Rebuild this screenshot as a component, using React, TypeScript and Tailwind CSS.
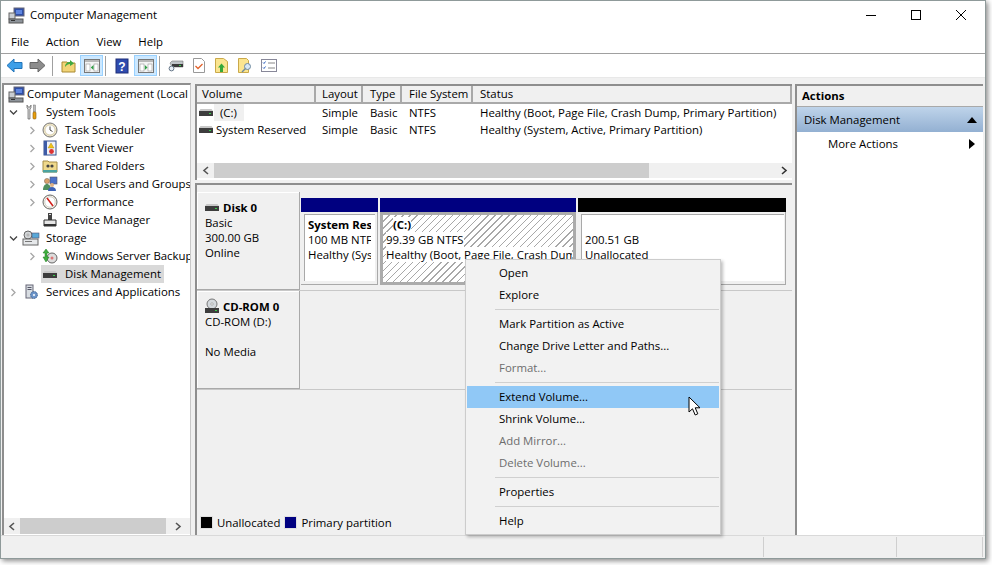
import React from "react";

// small drawn icons, 16px box unless noted
const Computer = () => (
  <svg width="17" height="17" viewBox="0 0 17 17" className="shrink-0">
    <rect x="6" y="1" width="10" height="8" fill="#2f4fa8" stroke="#667" />
    <rect x="8" y="3" width="6" height="4" fill="#5f86e0" />
    <rect x="1" y="6" width="6" height="6" fill="#c9cdd2" stroke="#666" />
    <rect x="1" y="12" width="14" height="4" fill="#8d939a" stroke="#555" />
    <rect x="3" y="13" width="4" height="1" fill="#333" />
  </svg>
);
const Tools = () => (
  <svg width="16" height="16" viewBox="0 0 16 16" className="shrink-0">
    <path d="M4 1v3l1 1v10h2V5l1-1V1L7 3H5z" fill="#d5d5d5" stroke="#666" strokeWidth=".7" />
    <rect x="10.5" y="1" width="2" height="7" fill="#bbb" stroke="#777" strokeWidth=".5" />
    <rect x="10" y="8" width="3" height="7" rx="1" fill="#e8a010" stroke="#8a5a00" strokeWidth=".6" />
  </svg>
);
const Clock = () => (
  <svg width="16" height="16" viewBox="0 0 16 16" className="shrink-0">
    <circle cx="8" cy="8" r="7" fill="#efe6c8" stroke="#777" />
    <circle cx="8" cy="8" r="5" fill="#fff" stroke="#c5b98e" strokeWidth=".6" />
    <path d="M8 4.5V8l2.5 1.5" stroke="#444" fill="none" />
  </svg>
);
const EventLog = () => (
  <svg width="16" height="16" viewBox="0 0 16 16" className="shrink-0">
    <rect x="2" y="1" width="12" height="14" fill="#eef1f8" stroke="#36508f" />
    <rect x="2" y="1" width="3" height="14" fill="#3d5ba6" />
    <path d="M9 3l3 5H6z" fill="#f2c21a" stroke="#a57d00" strokeWidth=".4" />
    <circle cx="9.5" cy="11.5" r="2.4" fill="#d33" />
  </svg>
);
const Shared = () => (
  <svg width="16" height="16" viewBox="0 0 16 16" className="shrink-0">
    <path d="M1 3h5l1 1h8v10H1z" fill="#efd98c" stroke="#a58c45" />
    <circle cx="6" cy="8" r="1.6" fill="#444" />
    <circle cx="10" cy="8" r="1.6" fill="#444" />
    <rect x="1" y="12" width="14" height="2.5" fill="#4aa3a0" />
  </svg>
);
const Users = () => (
  <svg width="16" height="16" viewBox="0 0 16 16" className="shrink-0">
    <rect x="8" y="1" width="7" height="7" fill="#4d72c9" stroke="#556" strokeWidth=".6" />
    <circle cx="5" cy="5" r="2.6" fill="#d9a06b" stroke="#765" strokeWidth=".5" />
    <path d="M1 14c0-4 2-6 4-6s4 2 4 6z" fill="#4f8f5f" />
    <circle cx="10" cy="9" r="2" fill="#dfb184" />
    <path d="M6 15c0-3 2-4 4-4s4 1 4 4z" fill="#3e62b5" />
  </svg>
);
const Perf = () => (
  <svg width="16" height="16" viewBox="0 0 16 16" className="shrink-0">
    <circle cx="8" cy="8" r="7" fill="#f7f3e6" stroke="#666" />
    <circle cx="8" cy="8" r="5.2" fill="#fff" stroke="#aaa" strokeWidth=".5" />
    <path d="M5 4l6 8" stroke="#d2201a" strokeWidth="1.5" />
  </svg>
);
const DevMgr = () => (
  <svg width="16" height="16" viewBox="0 0 16 16" className="shrink-0">
    <rect x="6" y="1" width="4" height="7" fill="#444" />
    <rect x="7" y="2" width="2" height="1" fill="#ddd" />
    <path d="M2 8h12v6H2z" fill="#e6e6e6" stroke="#333" />
    <rect x="2" y="12" width="12" height="2" fill="#333" />
  </svg>
);
const Storage = () => (
  <svg width="18" height="16" viewBox="0 0 18 16" className="shrink-0">
    <circle cx="6" cy="5" r="4" fill="#d3d6d8" stroke="#666" />
    <circle cx="6" cy="5" r="1" fill="#fff" stroke="#666" strokeWidth=".5" />
    <rect x="10" y="3" width="7" height="5" fill="#58a8d8" stroke="#557" strokeWidth=".6" />
    <rect x="1" y="9" width="15" height="6" fill="#e6e8ea" stroke="#666" />
    <rect x="3" y="11" width="7" height="1" fill="#777" />
  </svg>
);
const Backup = () => (
  <svg width="16" height="16" viewBox="0 0 16 16" className="shrink-0">
    <circle cx="10" cy="10" r="5" fill="#ddd" stroke="#666" />
    <circle cx="10" cy="10" r="1.5" fill="#d77" />
    <path d="M4 1l3 4H5v4h2l-3 5-3-5h2V5H1z" fill="#3fae3f" stroke="#1f7a1f" strokeWidth=".5" />
  </svg>
);
const Services = () => (
  <svg width="16" height="16" viewBox="0 0 16 16" className="shrink-0">
    <rect x="3" y="1" width="7" height="13" fill="#d8dde2" stroke="#667" />
    <rect x="4.5" y="3" width="4" height="1" fill="#556" />
    <rect x="4.5" y="5" width="4" height="1" fill="#556" />
    <circle cx="11" cy="11" r="3.4" fill="#6d95c9" stroke="#3b5f8f" strokeWidth="1" strokeDasharray="1.4 .7" />
    <circle cx="11" cy="11" r="1" fill="#fff" />
  </svg>
);
const Drive = () => (
  <svg width="14" height="9" viewBox="0 0 14 9" className="shrink-0">
    <path d="M0 3l1.5-2h11L14 3z" fill="#c8c8c8" />
    <rect x="0" y="3" width="14" height="5" fill="#3d3d3d" />
    <rect x="10" y="5" width="2" height="1" fill="#37d04a" />
  </svg>
);
const Disc = () => (
  <svg width="14" height="16" viewBox="0 0 14 16" className="shrink-0">
    <circle cx="7" cy="6" r="5" fill="#d5dade" stroke="#777" />
    <circle cx="7" cy="6" r="1.2" fill="#fff" stroke="#777" strokeWidth=".5" />
    <rect x="0" y="10" width="14" height="5" fill="#3d3d3d" />
    <rect x="10" y="12" width="2" height="1" fill="#37d04a" />
  </svg>
);

const Chevron = ({ open }: { open?: boolean }) => (
  <svg width="9" height="9" viewBox="0 0 9 9" className="shrink-0">
    {open ? (
      <path d="M1 2.5l3.5 3.5L8 2.5" fill="none" stroke="#444" strokeWidth="1.3" />
    ) : (
      <path d="M2.5 1L6 4.5 2.5 8" fill="none" stroke="#a6a6a6" strokeWidth="1.3" />
    )}
  </svg>
);

const ScrollArrow = ({ dir, dark }: { dir: "l" | "r"; dark?: boolean }) => (
  <svg width="8" height="9" viewBox="0 0 8 9" className="shrink-0">
    <path d={dir === "l" ? "M6 1L2 4.5 6 8" : "M2 1l4 3.5L2 8"} fill="none" stroke={dark ? "#333" : "#555"} strokeWidth="1.6" />
  </svg>
);

const ToolBtn = ({ active, className, children }: { active?: boolean; className?: string; children: React.ReactNode }) => (
  <div className={`w-[23px] h-[21px] flex items-center justify-center shrink-0 ${active ? "bg-[#cce8ff] border border-[#99d1ff]" : ""} ${className ?? ""}`}>
    {children}
  </div>
);

const Panes = ({ side }: { side: "l" | "r" }) => (
  <svg width="16" height="14" viewBox="0 0 16 14">
    <rect x=".5" y=".5" width="15" height="13" fill="#f4f4f4" stroke="#777" />
    <rect x="1" y="1" width="14" height="2" fill="#b9b9b9" />
    <rect x="2" y="5" width="4" height="7" fill="#fff" stroke="#999" strokeWidth=".6" />
    <rect x="10" y="5" width="4" height="7" fill="#fff" stroke="#999" strokeWidth=".6" />
    <path d={side === "l" ? "M9.5 6v5L6.8 8.5z" : "M6.8 6v5l2.7-2.5z"} fill="#2f9e44" />
  </svg>
);

const Sep = ({ className }: { className: string }) => <div className={`w-px h-[20px] bg-[#a0a0a0] shrink-0 ${className}`} />;

const Toolbar = () => (
  <div className="h-[23px] flex items-center pl-[2px] bg-white shrink-0">
    <ToolBtn>
      <svg width="17" height="15" viewBox="0 0 17 15">
        <path d="M8 1L1 7.5 8 14v-3.5h8v-6H8z" fill="#3d9fe8" stroke="#2173b8" />
      </svg>
    </ToolBtn>
    <ToolBtn>
      <svg width="17" height="15" viewBox="0 0 17 15">
        <path d="M9 1l7 6.5L9 14v-3.5H1v-6h8z" fill="#8c8c8c" stroke="#666" />
      </svg>
    </ToolBtn>
    <Sep className="ml-[3px] mr-[4px]" />
    <ToolBtn>
      <svg width="15" height="15" viewBox="0 0 15 15">
        <path d="M1 4h5l1 1h7v9H1z" fill="#f2d477" stroke="#a98a35" />
        <path d="M4 9c0-3 2-5 5-5V2l4 3.5L9 8V6C7 6 5.5 7 4 9z" fill="#3fa83f" />
      </svg>
    </ToolBtn>
    <ToolBtn active><Panes side="l" /></ToolBtn>
    <Sep className="ml-[2px] mr-[4px]" />
    <ToolBtn>
      <svg width="14" height="16" viewBox="0 0 14 16">
        <rect x="1" y="1" width="12" height="14" fill="#2f4bae" stroke="#1e2f78" />
        <text x="7" y="12.5" textAnchor="middle" fontSize="12" fontWeight="700" fill="#fff" fontFamily="Liberation Sans">?</text>
      </svg>
    </ToolBtn>
    <ToolBtn active className="ml-[1px]"><Panes side="r" /></ToolBtn>
    <Sep className="ml-[2px] mr-[4px]" />
    <ToolBtn>
      <svg width="16" height="12" viewBox="0 0 16 12">
        <path d="M2 3l2-2h11v6H4z" fill="#bfc4c8" stroke="#777" strokeWidth=".6" />
        <rect x="4" y="4" width="11" height="3" fill="#3a3a3a" />
        <rect x="11" y="5" width="2" height="1" fill="#37d04a" />
        <circle cx="3.5" cy="8.5" r="2.4" fill="#e8eef5" stroke="#678" />
      </svg>
    </ToolBtn>
    <ToolBtn>
      <svg width="12" height="15" viewBox="0 0 12 15">
        <path d="M.5.5h8l3 3v11H.5z" fill="#fff" stroke="#999" />
        <path d="M2.5 8l2.5 2.5L9.5 6" fill="none" stroke="#e2622b" strokeWidth="1.3" />
      </svg>
    </ToolBtn>
    <ToolBtn>
      <svg width="13" height="15" viewBox="0 0 13 15">
        <path d="M.5.5h8l4 3v11H.5z" fill="#fbe58f" stroke="#caa94a" />
        <path d="M6.5 5.5l3.5 4H8V14H5V9.5H3z" fill="#36a83a" />
      </svg>
    </ToolBtn>
    <ToolBtn className="ml-[1px]">
      <svg width="15" height="15" viewBox="0 0 15 15">
        <path d="M.5.5h8l2 2v12H.5z" fill="#fbe58f" stroke="#caa94a" />
        <circle cx="9.5" cy="8.5" r="3" fill="#d7e8f5" stroke="#6f8a9f" />
        <path d="M7.5 10.5L4 14" stroke="#6f8a9f" strokeWidth="1.5" />
      </svg>
    </ToolBtn>
    <ToolBtn>
      <svg width="16" height="13" viewBox="0 0 16 13">
        <rect x=".5" y=".5" width="15" height="12" fill="#fff" stroke="#889" />
        <path d="M2 3.5l1 1 1.5-2M2 8.5l1 1 1.5-2" fill="none" stroke="#2f62c0" />
        <path d="M7 4h7M7 9h7" stroke="#888" />
      </svg>
    </ToolBtn>
  </div>
);

type TreeItem = { level: number; label: string; icon: React.ReactNode; arrow?: "open" | "closed"; selected?: boolean };

const treeItems: TreeItem[] = [
  { level: 0, label: "Computer Management (Local", icon: <Computer /> },
  { level: 1, label: "System Tools", icon: <Tools />, arrow: "open" },
  { level: 2, label: "Task Scheduler", icon: <Clock />, arrow: "closed" },
  { level: 2, label: "Event Viewer", icon: <EventLog />, arrow: "closed" },
  { level: 2, label: "Shared Folders", icon: <Shared />, arrow: "closed" },
  { level: 2, label: "Local Users and Groups", icon: <Users />, arrow: "closed" },
  { level: 2, label: "Performance", icon: <Perf />, arrow: "closed" },
  { level: 2, label: "Device Manager", icon: <DevMgr /> },
  { level: 1, label: "Storage", icon: <Storage />, arrow: "open" },
  { level: 2, label: "Windows Server Backup", icon: <Backup />, arrow: "closed" },
  { level: 2, label: "Disk Management", icon: <Drive />, selected: true },
  { level: 1, label: "Services and Applications", icon: <Services />, arrow: "closed" },
];

const indent = ["pl-[3px]", "pl-[5px]", "pl-[24px]"];

const Tree = () => (
  <div className="w-[189px] shrink-0 flex flex-col bg-white border-l-2 border-t-2 border-[#8e8e8e] border-r border-r-[#c8c8c8] overflow-hidden">
    <div className="flex-1 overflow-hidden">
      {treeItems.map((t) => (
        <div key={t.label} className={`h-[18px] flex items-center whitespace-nowrap ${indent[t.level]}`}>
          {t.level > 0 && (
            <div className="w-[9px] shrink-0 mr-[4px] flex">
              {t.arrow && <Chevron open={t.arrow === "open"} />}
            </div>
          )}
          <div className={`flex items-center h-[18px] ${t.selected ? "bg-[#d9d9d9] pr-[3px]" : ""}`}>
            <div className="w-[18px] flex justify-center shrink-0">{t.icon}</div>
            <span className={t.level > 0 ? "ml-[6px]" : "ml-[2px]"}>{t.label}</span>
          </div>
        </div>
      ))}
    </div>
    <div className="h-[16px] mb-[1px] flex items-center shrink-0 bg-[#f0f0f0]">
      <div className="w-[16px] flex justify-center"><ScrollArrow dir="l" /></div>
      <div className="w-[146px] h-full bg-[#cdcdcd]" />
      <div className="flex-1 flex justify-center"><ScrollArrow dir="r" /></div>
    </div>
  </div>
);

const cols = "grid grid-cols-[119px_47px_39px_71px_1fr]";
const pads = ["pl-[5px]", "pl-[6px]", "pl-[7px]", "pl-[7px]", "pl-[7px]"];

const VolumeList = () => (
  <div className="h-[96px] shrink-0 flex flex-col bg-white border-l-2 border-t-2 border-[#8e8e8e]">
    <div className={`${cols} shrink-0`}>
      {["Volume", "Layout", "Type", "File System", "Status"].map((h, i) => (
        <div key={h} className={`h-[18px] flex items-center bg-[#f0f0f0] border-r-2 border-r-[#a9a9a9] border-b-2 border-b-[#a9a9a9] ${pads[i]}`}>{h}</div>
      ))}
    </div>
    <div className="flex-1">
      <div className={`${cols} h-[17px] items-center whitespace-nowrap`}>
        <div className="flex items-center pl-[2px]">
          <Drive />
          <span className="ml-[1px] pl-[6px] pr-[7px] bg-[#f0f0f0] leading-[17px]">(C:)</span>
        </div>
        <div className={pads[1]}>Simple</div>
        <div className={pads[2]}>Basic</div>
        <div className={pads[3]}>NTFS</div>
        <div className={pads[4]}>Healthy (Boot, Page File, Crash Dump, Primary Partition)</div>
      </div>
      <div className={`${cols} h-[17px] items-center whitespace-nowrap`}>
        <div className="flex items-center pl-[2px]">
          <Drive />
          <span className="ml-[3px]">System Reserved</span>
        </div>
        <div className={pads[1]}>Simple</div>
        <div className={pads[2]}>Basic</div>
        <div className={pads[3]}>NTFS</div>
        <div className={pads[4]}>Healthy (System, Active, Primary Partition)</div>
      </div>
    </div>
    <div className="h-[15px] mb-[2px] flex items-center shrink-0 bg-[#f0f0f0]">
      <div className="w-[17px] flex justify-center"><ScrollArrow dir="l" /></div>
      <div className="w-[435px] h-full bg-[#cdcdcd]" />
      <div className="flex-1" />
      <div className="w-[17px] flex justify-center"><ScrollArrow dir="r" dark /></div>
    </div>
  </div>
);

const DiskLabel = ({ children }: { children: React.ReactNode }) => (
  <div className="w-[103px] h-[98px] shrink-0 pl-[8px] pt-[8px] leading-[15px] bg-[#f0f0f0] border-r border-b border-[#a9a9a9] shadow-[inset_1px_1px_0_#fff]">
    {children}
  </div>
);

const DiskGraphics = () => (
  <div className="flex-1 min-h-0 flex flex-col bg-[#f0f0f0] border-l-2 border-t-2 border-[#8e8e8e]">
    <div className="flex-1 min-h-0 pt-[7px]">
      <div className="flex h-[99px] border-b border-[#c8c8c8]">
        <DiskLabel>
          <div className="flex items-center font-bold">
            <Drive />
            <span className="ml-[4px]">Disk 0</span>
          </div>
          <div>Basic</div>
          <div>300.00 GB</div>
          <div>Online</div>
        </DiskLabel>
        <div className="flex pl-[1px] pt-[6px] gap-[2px]">
          <div className="w-[77px]">
            <div className="h-[14px] bg-[#000080]" />
            <div className="h-[73px] pl-[3px] pr-[2px] pt-[2px] pb-[3px] bg-[#f0f0f0] border-r border-b border-[#a9a9a9]">
              <div className="h-full bg-white border-l border-t border-[#a9a9a9] pl-[3px] pr-[4px] pt-[2px] leading-[15px]">
                <div className="overflow-hidden whitespace-nowrap">
                  <div className="font-bold">System Reserved</div>
                  <div>100 MB NTFS</div>
                  <div>Healthy (System, Active, Primary Partition)</div>
                </div>
              </div>
            </div>
          </div>
          <div className="w-[196px]">
            <div className="h-[14px] bg-[#000080]" />
            <div className="h-[73px] border-[3px] border-[#ababab] bg-[repeating-linear-gradient(135deg,#fff_0,#fff_4px,#a8a8a8_4px,#a8a8a8_5px)] pl-[3px] pr-[1px] pt-[2px] leading-[15px]">
              <div className="overflow-hidden whitespace-nowrap">
                <div className="font-bold pl-[7px]"><span className="bg-white">(C:)</span></div>
                <div><span className="bg-white">99.39 GB NTFS</span></div>
                <div><span className="bg-white">Healthy (Boot, Page File, Crash Dump, Primary Partition)</span></div>
              </div>
            </div>
          </div>
          <div className="w-[208px]">
            <div className="h-[14px] bg-black" />
            <div className="h-[73px] pl-[3px] pr-[1px] pt-[2px] pb-[3px] bg-[#f0f0f0] border-r border-b border-[#a9a9a9]">
              <div className="h-full bg-white border-l border-t border-[#a9a9a9] pl-[3px] pt-[17px] leading-[15px]">
                <div>200.51 GB</div>
                <div>Unallocated</div>
              </div>
            </div>
          </div>
        </div>
      </div>
      <div className="flex h-[99px] border-b border-[#c8c8c8]">
        <DiskLabel>
          <div className="flex items-center font-bold -mt-[1px]">
            <Disc />
            <span className="ml-[4px]">CD-ROM 0</span>
          </div>
          <div>CD-ROM (D:)</div>
          <div className="h-[15px]" />
          <div>No Media</div>
        </DiskLabel>
      </div>
    </div>
    <div className="h-[21px] mb-[2px] shrink-0 flex items-center pl-[3px]">
      <div className="w-[11px] h-[11px] bg-black border border-[#e0e0e0] box-content" />
      <span className="ml-[4px]">Unallocated</span>
      <div className="ml-[4px] w-[11px] h-[11px] bg-[#000080] border border-[#e0e0e0] box-content" />
      <span className="ml-[4px]">Primary partition</span>
    </div>
  </div>
);

const ActionsPane = () => (
  <div className="w-[188px] shrink-0 flex flex-col bg-white border-l-2 border-t-2 border-[#8e8e8e]">
    <div className="h-[21px] pl-[5px] flex items-center font-bold bg-[#f0f0f0] border-b border-[#a9a9a9]">Actions</div>
    <div className="h-[25px] pl-[7px] pr-[6px] flex items-center justify-between bg-gradient-to-b from-[#bfd4ea] to-[#93b0d2]">
      <span>Disk Management</span>
      <svg width="10" height="6" viewBox="0 0 10 6"><path d="M5 0l5 6H0z" fill="#000" /></svg>
    </div>
    <div className="h-[24px] pl-[31px] pr-[8px] flex items-center justify-between">
      <span>More Actions</span>
      <svg width="6" height="10" viewBox="0 0 6 10"><path d="M0 0l6 5-6 5z" fill="#000" /></svg>
    </div>
  </div>
);

const MenuRow = ({ label, disabled, active }: { label: string; disabled?: boolean; active?: boolean }) => (
  <div className={`h-[22px] pl-[32px] flex items-center ${active ? "bg-[#90c8f6]" : ""} ${disabled ? "text-[#6d6d6d]" : ""}`}>{label}</div>
);

const MenuSep = () => (
  <div className="h-[7px] flex items-center pl-[28px]">
    <div className="w-full h-px bg-[#d0d0d0]" />
  </div>
);

const ContextMenu = () => (
  <div className="absolute left-[465px] top-[259px] w-[256px] h-[276px] bg-[#f2f2f2] border border-[#cccccc] pl-[1px] pr-[1px] pt-[2px] shadow-[2px_2px_3px_rgba(0,0,0,0.25)]">
    <MenuRow label="Open" />
    <MenuRow label="Explore" />
    <MenuSep />
    <MenuRow label="Mark Partition as Active" />
    <MenuRow label="Change Drive Letter and Paths..." />
    <MenuRow label="Format..." disabled />
    <MenuSep />
    <MenuRow label="Extend Volume..." active />
    <MenuRow label="Shrink Volume..." />
    <MenuRow label="Add Mirror..." disabled />
    <MenuRow label="Delete Volume..." disabled />
    <MenuSep />
    <MenuRow label="Properties" />
    <MenuSep />
    <MenuRow label="Help" />
    <svg width="13" height="21" viewBox="0 0 13 21" className="absolute left-[222px] top-[136px]">
      <path d="M1 1v15l3.5-3.2L7.2 19l2.6-1.2-2.6-6H12z" fill="#fff" stroke="#000" strokeWidth="1" strokeLinejoin="miter" />
    </svg>
  </div>
);

export default function App() {
  return (
    <div className="relative w-[992px] h-[565px] bg-white overflow-hidden font-['Open_Sans',sans-serif] text-[11.4px] text-black">
      <div className="w-[986px] h-[559px] flex flex-col bg-[#f0f0f0] border border-[#8f9a9a] shadow-[2px_2px_5px_rgba(0,0,0,0.45)]">
        {/* title bar */}
        <div className="h-[30px] pb-[2px] shrink-0 flex items-center bg-white pl-[7px]">
          <Computer />
          <span className="ml-[5px]">Computer Management</span>
          <div className="ml-auto flex items-center gap-[35px] pr-[19px]">
            <div className="w-[10px] h-px bg-black" />
            <div className="w-[10px] h-[10px] border border-black" />
            <svg width="10" height="10" viewBox="0 0 10 10">
              <path d="M0 0l10 10M10 0L0 10" stroke="#000" />
            </svg>
          </div>
        </div>
        {/* menu bar */}
        <div className="h-[23px] shrink-0 flex items-center bg-white pl-[10px] gap-[17px] border-b border-[#a0a0a0]">
          <span>File</span>
          <span>Action</span>
          <span>View</span>
          <span>Help</span>
        </div>
        <Toolbar />
        {/* panes */}
        <div className="flex-1 min-h-0 flex pt-[5px] pl-[1px] border-t border-t-[#e8e8e8]">
          <Tree />
          <div className="w-[4px] shrink-0" />
          <div className="w-[597px] mt-[1px] shrink-0 flex flex-col gap-[3px]">
            <VolumeList />
            <DiskGraphics />
          </div>
          <div className="w-[3px] shrink-0" />
          <div className="mt-[1px] flex">
            <ActionsPane />
          </div>
        </div>
        {/* status bar */}
        <div className="h-[23px] shrink-0 flex border-t border-[#d9d9d9] py-[1px]">
          <div className="w-[763px] border-r border-[#cfcfcf]" />
          <div className="w-[133px] border-r border-[#cfcfcf]" />
          <div className="w-[86px] border-r border-[#cfcfcf]" />
        </div>
      </div>
      <ContextMenu />
    </div>
  );
}
